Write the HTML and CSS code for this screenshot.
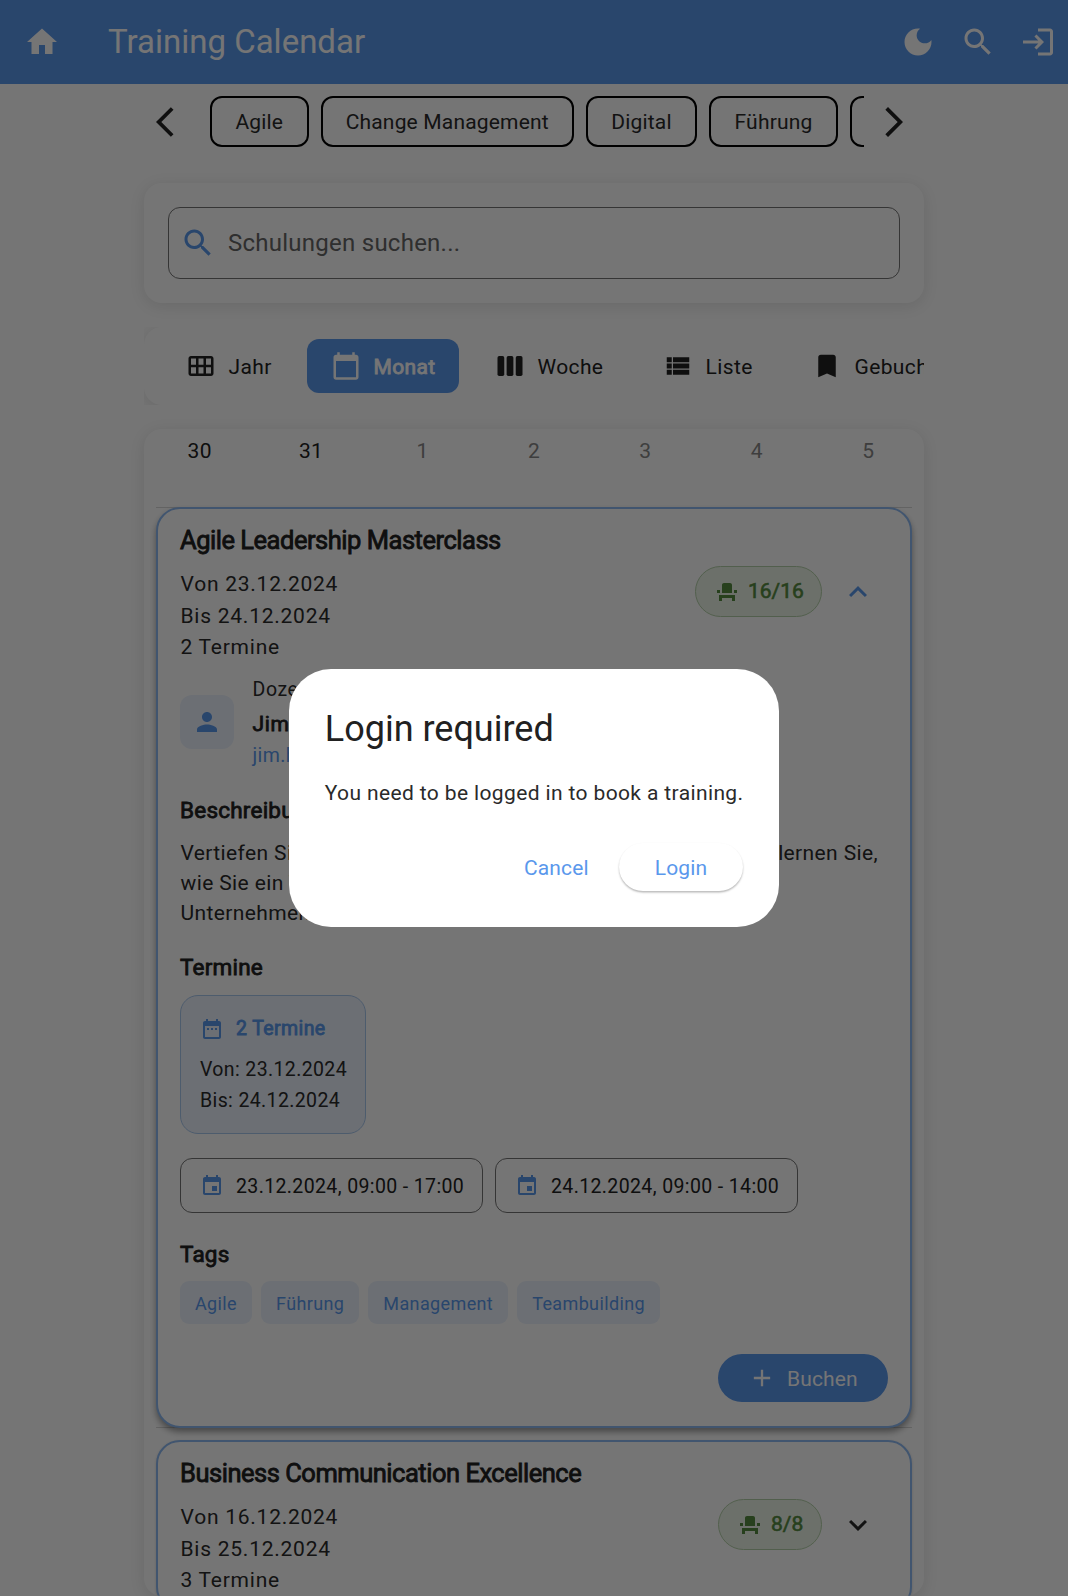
FILE: index.html
```html
<!DOCTYPE html>
<html lang="de">
<head>
<meta charset="utf-8">
<title>Training Calendar</title>
<link rel="stylesheet" href="styles.css">
</head>
<body>
<svg class="sprite" width="0" height="0" aria-hidden="true">
  <symbol id="search" viewBox="0 0 24 24"><path d="M15.5 14h-.79l-.28-.27C15.41 12.59 16 11.11 16 9.5 16 5.91 13.09 3 9.5 3S3 5.91 3 9.5 5.91 16 9.5 16c1.61 0 3.09-.59 4.23-1.57l.27.28v.79l5 4.99L20.49 19l-4.99-5zm-6 0C7.01 14 5 11.99 5 9.5S7.01 5 9.5 5 14 7.01 14 9.5 11.99 14 9.5 14z"/></symbol>
  <symbol id="seat" viewBox="0 0 24 24"><path d="M4 18v3h3v-3h10v3h3v-6H4zm15-8h3v3h-3zM2 10h3v3H2zm15 3H7V5c0-1.1.9-2 2-2h6c1.1 0 2 .9 2 2v8z"/></symbol>
  <symbol id="event" viewBox="0 0 24 24"><path d="M17 12h-5v5h5v-5zM16 1v2H8V1H6v2H5c-1.11 0-1.99.9-1.99 2L3 19c0 1.1.89 2 2 2h14c1.1 0 2-.9 2-2V5c0-1.1-.9-2-2-2h-1V1h-2zm3 18H5V8h14v11z"/></symbol>
</svg>

<header class="appbar">
  <svg class="i36" viewBox="0 0 24 24"><path d="M10 20v-6h4v6h5v-8h3L12 3 2 12h3v8z"/></svg>
  <h1>Training Calendar</h1>
  <div class="actions">
    <svg class="i36" viewBox="0 0 24 24"><path d="M12 3c-4.97 0-9 4.03-9 9s4.03 9 9 9 9-4.03 9-9c0-.46-.04-.92-.1-1.36-.98 1.37-2.58 2.26-4.4 2.26-2.98 0-5.4-2.42-5.4-5.4 0-1.81.89-3.42 2.26-4.4-.44-.06-.9-.1-1.36-.1z"/></svg>
    <svg class="i36"><use href="#search"/></svg>
    <svg class="i36" viewBox="0 0 24 24"><path d="M11 7L9.6 8.4l2.6 2.6H2v2h10.2l-2.6 2.6L11 17l5-5-5-5zm9 12h-8v2h8c1.1 0 2-.9 2-2V5c0-1.1-.9-2-2-2h-8v2h8v14z"/></svg>
  </div>
</header>

<main class="content">
  <div class="filters">
    <svg class="i36" viewBox="0 0 24 24"><path d="M11.67 3.87L9.9 2.1 0 12l9.9 9.9 1.77-1.77L3.54 12z"/></svg>
    <div class="chips">
      <span class="chip c1">Agile</span>
      <span class="chip c2">Change Management</span>
      <span class="chip c3">Digital</span>
      <span class="chip c4">Führung</span>
      <span class="chip c5"></span>
    </div>
    <svg class="i36" viewBox="0 0 24 24"><path d="M6.23 20.23L8 22l10-10L8 2 6.23 3.77 14.46 12z"/></svg>
  </div>

  <section class="search-card">
    <div class="search-field">
      <svg class="i36"><use href="#search"/></svg>
      <span>Schulungen suchen...</span>
    </div>
  </section>

  <nav class="tabs">
    <div class="tabs-track">
      <div class="tab t1"><svg class="i30" viewBox="0 0 24 24"><path d="M20 4H4c-1.1 0-2 .9-2 2v12c0 1.1.9 2 2 2h16c1.1 0 2-.9 2-2V6c0-1.1-.9-2-2-2zM8 11H4V6h4v5zm6 0h-4V6h4v5zm6 0h-4V6h4v5zM8 18H4v-5h4v5zm6 0h-4v-5h4v5zm6 0h-4v-5h4v5z"/></svg><span>Jahr</span></div>
      <div class="tab t2 active"><svg class="i30" viewBox="0 0 24 24"><path d="M20 3h-1V1h-2v2H7V1H5v2H4c-1.1 0-2 .9-2 2v16c0 1.1.9 2 2 2h16c1.1 0 2-.9 2-2V5c0-1.1-.9-2-2-2zm0 18H4V8h16v13z"/></svg><b>Monat</b></div>
      <div class="tab t3"><svg class="i30" viewBox="0 0 24 24"><rect x="2" y="4" width="5.4" height="16" rx="1.4"/><rect x="9.3" y="4" width="5.4" height="16" rx="1.4"/><rect x="16.6" y="4" width="5.4" height="16" rx="1.4"/></svg><span>Woche</span></div>
      <div class="tab t4"><svg class="i30" viewBox="0 0 24 24"><path d="M3 14h4v-4H3v4zm0 5h4v-4H3v4zM3 9h4V5H3v4zm5 5h13v-4H8v4zm0 5h13v-4H8v4zM8 5v4h13V5H8z"/></svg><span>Liste</span></div>
      <div class="tab t5"><svg class="i30" viewBox="0 0 24 24"><path d="M17 3H7c-1.1 0-1.99.9-1.99 2L5 21l7-3 7 3V5c0-1.1-.9-2-2-2z"/></svg><span>Gebucht</span></div>
    </div>
  </nav>

  <section class="calendar">
    <div class="days">
      <span>30</span><span>31</span><span class="out">1</span><span class="out">2</span><span class="out">3</span><span class="out">4</span><span class="out">5</span>
    </div>

    <div class="entry ruled">
      <article class="training raised">
        <h2>Agile Leadership Masterclass</h2>
        <div class="summary">
          <div class="dates">Von 23.12.2024<br>Bis 24.12.2024<br>2 Termine</div>
          <div class="seats w16"><svg class="i24"><use href="#seat"/></svg><b>16/16</b></div>
          <svg class="i36 blue" viewBox="0 0 24 24"><path d="M12 8l-6 6 1.41 1.41L12 10.83l4.59 4.58L18 14z"/></svg>
        </div>
        <div class="trainer">
          <div class="avatar"><svg class="i30" viewBox="0 0 24 24"><path d="M12 12c2.21 0 4-1.79 4-4s-1.79-4-4-4-4 1.79-4 4 1.79 4 4 4zm0 2c-2.67 0-8 1.34-8 4v2h16v-2c0-2.66-5.33-4-8-4z"/></svg></div>
          <div>
            <div class="role">Dozent</div>
            <div class="name">Jim</div>
            <div class="mail">jim.h</div>
          </div>
        </div>
        <h3 class="h-desc">Beschreibung</h3>
        <div class="desc">
          <div class="line"><span>Vertiefen Sie Ihre Führung</span><span>lernen Sie,</span></div>
          <div>wie Sie ein Team</div>
          <div>Unternehmen</div>
        </div>
        <h3 class="h-dates">Termine</h3>
        <div class="range">
          <div class="range-head"><svg class="i24" viewBox="0 0 24 24"><path d="M9 11H7v2h2v-2zm4 0h-2v2h2v-2zm4 0h-2v2h2v-2zm2-7h-1V2h-2v2H8V2H6v2H5c-1.11 0-1.99.9-1.99 2L3 20c0 1.1.89 2 2 2h14c1.1 0 2-.9 2-2V6c0-1.1-.9-2-2-2zm0 16H5V9h14v11z"/></svg><b>2 Termine</b></div>
          <div class="range-body">Von: 23.12.2024<br>Bis: 24.12.2024</div>
        </div>
        <div class="slots">
          <div class="slot"><svg class="i24"><use href="#event"/></svg><span>23.12.2024, 09:00 - 17:00</span></div>
          <div class="slot"><svg class="i24"><use href="#event"/></svg><span>24.12.2024, 09:00 - 14:00</span></div>
        </div>
        <h3 class="h-tags">Tags</h3>
        <div class="tags"><span>Agile</span><span>Führung</span><span>Management</span><span>Teambuilding</span></div>
        <div class="book-row">
          <div class="book"><svg class="i28" viewBox="0 0 24 24"><path d="M19 13h-6v6h-2v-6H5v-2h6V5h2v6h6v2z"/></svg><span>Buchen</span></div>
        </div>
      </article>
    </div>

    <div class="entry">
      <article class="training">
        <h2>Business Communication Excellence</h2>
        <div class="summary">
          <div class="dates">Von 16.12.2024<br>Bis 25.12.2024<br>3 Termine</div>
          <div class="seats w8"><svg class="i24"><use href="#seat"/></svg><b>8/8</b></div>
          <svg class="i36" viewBox="0 0 24 24"><path d="M16.59 8.59L12 13.17 7.41 8.59 6 10l6 6 6-6z"/></svg>
        </div>
      </article>
    </div>
  </section>
</main>

<div class="scrim">
  <div class="dialog" role="dialog">
    <h2>Login required</h2>
    <p>You need to be logged in to book a training.</p>
    <div class="buttons"><span class="cancel">Cancel</span><span class="login">Login</span></div>
  </div>
</div>
</body>
</html>
```
FILE: styles.css
```css
* { box-sizing: border-box; margin: 0; padding: 0; }
:root { --primary: #5a98ec; --ink: #212121; }
html, body { height: 1596px; overflow: hidden; }
body {
  background: #fefefe;
  color: #2a2a2a;
  font: 400 21px/30px Roboto, sans-serif;
  white-space: nowrap;
}
svg { display: block; flex: none; fill: currentColor; }
.sprite { position: absolute; }
.i24 { width: 24px; height: 24px; }
.i28 { width: 28px; height: 28px; }
.i30 { width: 30px; height: 30px; }
.i36 { width: 36px; height: 36px; }
.blue { color: var(--primary); }
b, h2, h3, .name { font-weight: 400; -webkit-text-stroke: 0.8px currentColor; }

.appbar {
  display: flex;
  align-items: center;
  height: 84px;
  padding: 0 12px 0 24px;
  background: var(--primary);
  color: #fff;
}
.appbar h1 { margin-left: 48px; font-size: 33px; font-weight: 400; line-height: 42px; }
.actions { display: flex; gap: 24px; margin-left: auto; }

.content { width: 780px; margin: 0 auto; }
.filters {
  display: flex;
  align-items: center;
  height: 75px;
  padding: 0 12px;
  color: var(--ink);
}
.chips { display: flex; gap: 12px; width: 672px; margin: 0 12px 0 0; padding-left: 18px; overflow: hidden; }
.chip {
  display: flex;
  flex: none;
  align-items: center;
  justify-content: center;
  height: 51px;
  border: 2px solid #000;
  border-radius: 12px;
  color: #2a2a2a;
  letter-spacing: 0.18px;
}
.c1 { width: 98.5px; }
.c2 { width: 253.5px; }
.c3 { width: 111px; }
.c4 { width: 129px; }
.c5 { width: 120px; }

.search-card {
  margin-top: 24px;
  padding: 24px;
  height: 120px;
  border-radius: 18px;
  background: #fff;
  box-shadow: 0 3px 15px rgba(0, 0, 0, 0.1);
}
.search-field {
  display: flex;
  align-items: center;
  gap: 12px;
  height: 72px;
  padding-left: 11px;
  border: 1.5px solid #757575;
  border-radius: 12px;
  color: #666;
  font-size: 24px;
  letter-spacing: 0.25px;
}
.search-field svg { color: var(--primary); }

.tabs { margin-top: 24px; height: 78px; overflow: hidden; }
.tabs-track {
  display: flex;
  align-items: center;
  gap: 12px;
  width: 840px;
  height: 78px;
  padding: 0 18px;
  border-radius: 18px;
  background: #fff;
  box-shadow: 0 3px 15px rgba(0, 0, 0, 0.1);
}
.tab {
  display: flex;
  flex: none;
  align-items: center;
  gap: 12.5px;
  height: 54px;
  padding-left: 24px;
  border-radius: 12px;
  color: var(--ink);
  letter-spacing: 0.38px;
}
.tab > :last-child { padding-top: 2px; }
.t1 { width: 133px; }
.t2 { width: 152px; }
.t3 { width: 156px; }
.t4 { width: 137px; }
.tab.active { background: var(--primary); color: #fff; }

.calendar {
  height: 1167px;
  margin-top: 24px;
  border-radius: 18px;
  background: #fff;
  box-shadow: 0 3px 15px rgba(0, 0, 0, 0.1);
  overflow: hidden;
}
.days {
  display: grid;
  grid-template-columns: repeat(7, 1fr);
  height: 78px;
  padding-top: 7px;
  text-align: center;
  color: var(--ink);
  letter-spacing: 0.38px;
}
.days .out { color: #888; }

.entry { margin: 0 12px 12px; }
.ruled {
  background: linear-gradient(#d8d8d8, #d8d8d8) top / 100% 1px no-repeat,
              linear-gradient(#d8d8d8, #d8d8d8) bottom / 100% 1px no-repeat;
}
.training {
  padding: 12.5px 22px 12px;
  border: 2px solid #8ebaf2;
  border-radius: 24px;
  background: #fff;
  box-shadow: 0 1px 3px rgba(0, 0, 0, 0.16);
}
.training.raised {
  height: 921px;
  box-shadow: 0 4px 6px rgba(0, 0, 0, 0.38);
}
.training h2 { color: var(--ink); font-size: 25.5px; line-height: 36px; letter-spacing: -0.48px; }
.summary { display: flex; align-items: flex-start; margin-top: 11.5px; padding-right: 12px; }
.dates { flex: 1; padding-left: 0.5px; line-height: 31.5px; letter-spacing: 0.75px; }
.seats {
  display: flex;
  align-items: center;
  gap: 9px;
  height: 51px;
  margin: -3px 18px 0 0;
  padding-left: 19px;
  border: 1.5px solid #b4d0a8;
  border-radius: 26px;
  background: #ebf3e8;
  color: #558b3f;
}
.seats b { padding-bottom: 2px; -webkit-text-stroke-width: 0.6px; }
.w16 { width: 127px; }
.w8 { width: 104px; }
.summary > svg { margin-top: 5px; }

.trainer { display: flex; align-items: center; gap: 18.5px; margin-top: 10.5px; }
.avatar {
  display: grid;
  place-items: center;
  width: 54px;
  height: 54px;
  border-radius: 12px;
  background: #ebf2fc;
  color: var(--primary);
}
.role { font-size: 19.5px; line-height: 31px; letter-spacing: 0.6px; }
.name { color: var(--ink); line-height: 38px; letter-spacing: 0.6px; }
.mail { color: var(--primary); font-size: 19.5px; line-height: 26px; letter-spacing: 0.38px; }

h3 { color: var(--ink); font-size: 22.5px; line-height: 30px; letter-spacing: 0.225px; }
.h-desc { margin: 25.5px 0 13px; }
.desc { padding-left: 0.5px; letter-spacing: 0.375px; }
.line { display: flex; justify-content: space-between; width: 697.5px; }
.h-dates { margin: 24px 0 13px; }
.range {
  width: 186px;
  height: 139px;
  padding: 18px 0 0 19px;
  border: 1.5px solid #a9c8ee;
  border-radius: 18px;
  background: #ebf2fc;
  font-size: 19.5px;
}
.range-head { display: flex; align-items: center; gap: 12px; color: var(--primary); letter-spacing: 0.4px; }
.range-body { margin-top: 10.5px; line-height: 31px; letter-spacing: 0.375px; }
.slots { display: flex; gap: 12px; margin-top: 24px; }
.slot {
  display: flex;
  align-items: center;
  gap: 12px;
  width: 303px;
  height: 55.5px;
  padding-left: 19px;
  border: 1.5px solid #757575;
  border-radius: 12px;
  color: var(--ink);
  font-size: 19.5px;
  letter-spacing: 0.375px;
}
.slot svg { margin-top: 1px; color: var(--primary); }
.slot span { padding-top: 3px; }
.h-tags { margin: 25.5px 0 12px; }
.tags { display: flex; gap: 9px; }
.tags span {
  height: 43.5px;
  padding: 1px 15px 0;
  border-radius: 9px;
  background: #ebf2fc;
  color: var(--primary);
  font-size: 18px;
  line-height: 43.5px;
  letter-spacing: 0.375px;
}
.book-row { display: flex; justify-content: flex-end; margin-top: 29.5px; }
.book {
  display: flex;
  align-items: center;
  gap: 11px;
  width: 170px;
  height: 48px;
  margin-top: 0.5px;
  padding-left: 30px;
  border-radius: 25px;
  background: var(--primary);
  color: #fff;
  letter-spacing: 0.15px;
}
.book span { padding-top: 2px; }

.scrim {
  position: fixed;
  inset: 0;
  display: flex;
  align-items: center;
  justify-content: center;
  background: rgba(0, 0, 0, 0.54);
}
.dialog {
  width: 490.5px;
  height: 258px;
  padding: 36px;
  border-radius: 42px;
  background: #fff;
}
.dialog h2 { color: var(--ink); font-size: 36px; line-height: 48px; -webkit-text-stroke: 0; }
.dialog p { margin-top: 25px; letter-spacing: 0.375px; line-height: 30px; }
.buttons { display: flex; align-items: center; justify-content: flex-end; margin-top: 35px; color: var(--primary); letter-spacing: 0.15px; }
.cancel { padding: 2px 30px 0; }
.login {
  width: 124.5px;
  height: 48px;
  padding-top: 1px;
  border-radius: 24px;
  background: #fff;
  box-shadow: 0 1.5px 2px rgba(0, 0, 0, 0.28);
  line-height: 48px;
  text-align: center;
}
```
